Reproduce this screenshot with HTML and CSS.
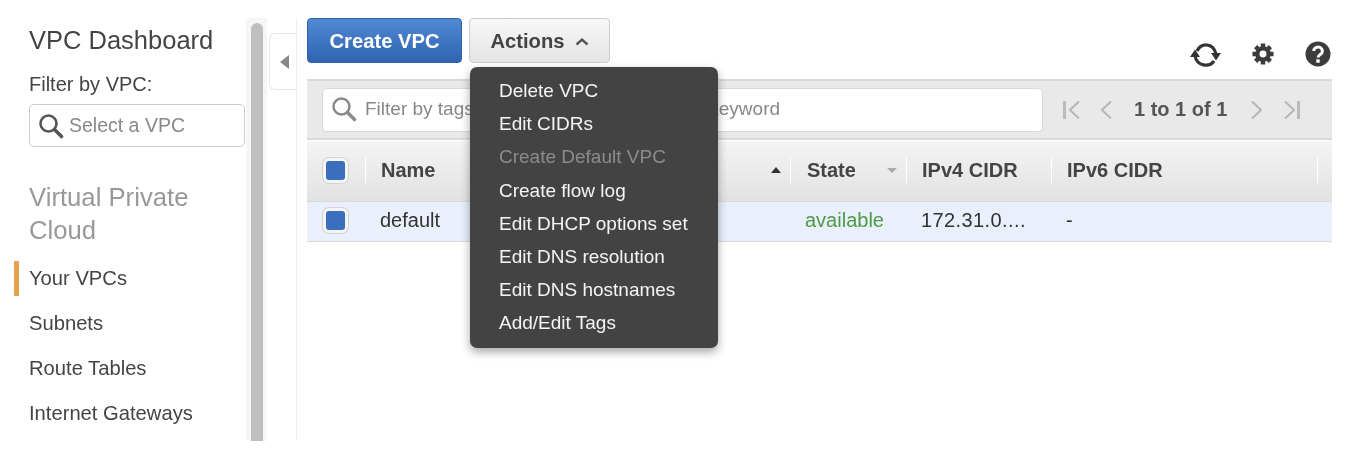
FILE: index.html
```html
<!DOCTYPE html>
<html lang="en">
<head>
    <meta charset="UTF-8">
    <meta name="viewport" content="width=device-width, initial-scale=1.0">
    <title>VPC Dashboard</title>
    <link rel="stylesheet" href="styles.css">
</head>
<body>
    <div class="page">
        <aside class="sidebar">
            <h2 class="side-title">VPC Dashboard</h2>
            <label class="side-label">Filter by VPC:</label>
            <div class="vpc-select">
                <svg class="search-icon" viewBox="0 0 26 26" width="26" height="26"><circle cx="10.5" cy="10.5" r="8" fill="none" stroke="#555" stroke-width="2.6"/><path d="M16.5 16.5l7 7" stroke="#555" stroke-width="3.6" stroke-linecap="round"/></svg>
                <span>Select a VPC</span>
            </div>
            <h3 class="side-section">Virtual Private Cloud</h3>
            <nav class="side-nav">
                <a class="nav-item active">Your VPCs</a>
                <a class="nav-item">Subnets</a>
                <a class="nav-item">Route Tables</a>
                <a class="nav-item">Internet Gateways</a>
            </nav>
        </aside>

        <div class="scroll-gutter"><div class="scroll-thumb"></div></div>

        <div class="collapse-col">
            <div class="collapse-tab"><span class="arrow-left"></span></div>
        </div>

        <main class="main">
            <div class="toolbar">
                <button class="btn btn-primary">Create VPC</button>
                <div class="actions-wrap">
                    <button class="btn btn-default">Actions
                        <svg viewBox="0 0 14 9" width="14" height="9"><path d="M1.5 7.5L7 2.5l5.5 5" fill="none" stroke="#555" stroke-width="2.4"/></svg>
                    </button>
                    <ul class="menu">
                        <li>Delete VPC</li>
                        <li>Edit CIDRs</li>
                        <li class="disabled">Create Default VPC</li>
                        <li>Create flow log</li>
                        <li>Edit DHCP options set</li>
                        <li>Edit DNS resolution</li>
                        <li>Edit DNS hostnames</li>
                        <li>Add/Edit Tags</li>
                    </ul>
                </div>
                <div class="tool-icons">
                    <svg class="refresh-icon" viewBox="4 8 31 26" width="31" height="26"><path d="M11 16C15 8 27 7 30 19" fill="none" stroke="#333" stroke-width="3.200"/><path d="M9 21C11 31 23 33 28 26" fill="none" stroke="#333" stroke-width="3.200"/><path d="M4 22h10L9 14.500z" fill="#333"/><path d="M25 18h10L30 25.500z" fill="#333"/></svg>
                    <svg viewBox="0 0 24 24" width="22" height="22"><circle cx="12" cy="12" r="8.500" fill="#3c3c3c"/><path d="M12 .5v23M.5 12h23M3.900 3.900l16.200 16.200M20.100 3.900L3.900 20.100" stroke="#3c3c3c" stroke-width="4.800"/><circle cx="12" cy="12" r="3.800" fill="#fff"/></svg>
                    <svg viewBox="0 0 26 26" width="26" height="26"><circle cx="13" cy="13" r="12.500" fill="#3c3c3c"/><path d="M8.800 10a4.300 4 0 1 1 6.500 3.400c-1.500 1-2.300 1.500-2.300 3.100" fill="none" stroke="#fff" stroke-width="3"/><rect x="11.300" y="18.300" width="3.400" height="3.400" fill="#fff"/></svg>
                </div>
            </div>

            <div class="filter-bar">
                <div class="filter-input">
                    <svg class="search-icon" viewBox="0 0 26 26" width="26" height="26"><circle cx="10.500" cy="10.500" r="8" fill="none" stroke="#888" stroke-width="2.400"/><path d="M16.500 16.500l7 7" stroke="#888" stroke-width="3.400" stroke-linecap="round"/></svg>
                    <span>Filter by tags and attributes or search by keyword</span>
                </div>
                <div class="pager">
                    <svg viewBox="0 0 17 18" width="17" height="18"><path d="M1.500 0v18" stroke="#bbb" stroke-width="3"/><path d="M16 .5L7 9l9 8.500" fill="none" stroke="#b5b5b5" stroke-width="2"/></svg>
                    <svg class="pager-prev" viewBox="0 0 12 18" width="12" height="18"><path d="M11 .5L2 9l9 8.500" fill="none" stroke="#b5b5b5" stroke-width="2"/></svg>
                    <span class="pager-text">1 to 1 of 1</span>
                    <svg class="pager-next" viewBox="0 0 12 18" width="12" height="18"><path d="M1 .5L10 9l-9 8.500" fill="none" stroke="#b5b5b5" stroke-width="2"/></svg>
                    <svg viewBox="0 0 16 18" width="16" height="18"><path d="M14.500 0v18" stroke="#bbb" stroke-width="3"/><path d="M1 .5L10 9l-9 8.500" fill="none" stroke="#b5b5b5" stroke-width="2"/></svg>
                </div>
            </div>

            <div class="table-head table-grid">
                <div class="cell cell-check"><span class="check"></span></div>
                <div class="cell head-cell name-head"><span>Name</span><span class="sort-up"></span></div>
                <div class="cell head-cell state-head"><span>State</span><span class="sort-down"></span></div>
                <div class="cell head-cell">IPv4 CIDR</div>
                <div class="cell head-cell">IPv6 CIDR</div>
                <div class="cell"></div>
            </div>
            <div class="table-row table-grid">
                <div class="cell cell-check"><span class="check"></span></div>
                <div class="cell">default</div>
                <div class="cell status">available</div>
                <div class="cell cidr">172.31.0....</div>
                <div class="cell">-</div>
                <div class="cell"></div>
            </div>
        </main>
    </div>
</body>
</html>
```

FILE: styles.css
```css
:root {
    --text-color: #444;
    --muted-color: #999;
    --line-color: #d9d9d9;
    --row-color: #e9f0fb;
    --blue-color: #3b6fbd;
}

* {
    margin: 0;
    padding: 0;
    box-sizing: border-box;
    font-family: "Liberation Sans", Arial, sans-serif;
}

body {
    background-color: white;
    color: var(--text-color);
    overflow: hidden;
}

/* the source picture is a soft, scaled up capture */
.page {
    display: flex;
    height: 423px;
    margin-top: 18px;
    width: 1332px;
    filter: blur(0.6px);
}

/* sidebar */
.sidebar {
    width: 246px;
    flex: none;
    padding-left: 29px;
    overflow: hidden;
}

.side-title {
    font-size: 25.500px;
    font-weight: normal;
    line-height: 30px;
    margin-top: 7px;
}

.side-label {
    display: block;
    font-size: 20px;
    line-height: 24px;
    margin-top: 17px;
}

.vpc-select {
    display: flex;
    align-items: center;
    gap: 5px;
    width: 216px;
    height: 43px;
    margin-top: 8px;
    padding-left: 8px;
    border: 1px solid #ccc;
    border-radius: 5px;
    font-size: 19.500px;
    color: #888;
}

.side-section {
    font-size: 25.700px;
    font-weight: normal;
    line-height: 33px;
    color: var(--muted-color);
    margin-top: 34px;
    width: 190px;
}

.side-nav {
    margin-top: 14px;
}

.nav-item {
    display: block;
    height: 35px;
    line-height: 35px;
    font-size: 20.200px;
    margin-bottom: 10px;
}

.nav-item.active {
    margin-left: -15px;
    padding-left: 10px;
    border-left: 5px solid #e8a24f;
}

/* scrollbar */
.scroll-gutter {
    width: 21px;
    flex: none;
    padding: 5px 4px 0 5px;
    background-color: #f6f6f6;
}

.scroll-thumb {
    height: 100%;
    background-color: #bfbfbf;
    border-radius: 6px 6px 0 0;
}

/* collapse tab */
.collapse-col {
    width: 30px;
    flex: none;
    padding: 15px 0 0 2px;
    border-right: 1px solid #eee;
}

.collapse-tab {
    display: flex;
    align-items: center;
    height: 57px;
    padding-left: 10px;
    border: 1px solid #e6e6e6;
    border-right: none;
    border-radius: 6px 0 0 6px;
}

.arrow-left {
    border-top: 7px solid transparent;
    border-bottom: 7px solid transparent;
    border-right: 9px solid #888;
}

/* main */
.main {
    flex: 1;
    padding-left: 10px;
    min-width: 0;
}

.toolbar {
    display: flex;
    height: 61px;
    gap: 7px;
}

.btn {
    height: 45px;
    padding-top: 2px;
    font-size: 20.200px;
    font-weight: bold;
    border-radius: 4px;
}

.btn-primary {
    width: 155px;
    color: white;
    background: linear-gradient(#5289d3, #2f64b0);
    border: 1px solid #2f63ad;
}

.btn-default {
    display: flex;
    align-items: center;
    justify-content: center;
    gap: 10px;
    width: 141px;
    color: #444;
    background: linear-gradient(#f8f8f8, #e4e4e4);
    border: 1px solid #ccc;
}

.actions-wrap {
    position: relative;
}

.menu {
    position: absolute;
    left: 1px;
    top: 49px;
    z-index: 5;
    width: 248px;
    height: 281px;
    padding-top: 7px;
    list-style: none;
    background-color: #434343;
    border-radius: 7px;
    box-shadow: 0 4px 10px rgba(0, 0, 0, 0.35);
}

.menu li {
    height: 33.200px;
    line-height: 33.200px;
    padding-left: 29px;
    font-size: 19px;
    color: #f4f4f4;
}

.menu li.disabled {
    color: #8c8c8c;
}

.tool-icons {
    display: flex;
    align-items: center;
    gap: 31px;
    margin-left: auto;
    padding: 11px 1px 0 0;
    height: 61px;
}

.refresh-icon {
    margin-top: 3px;
}

.filter-bar {
    display: flex;
    align-items: center;
    height: 61px;
    padding-left: 15px;
    background-color: #e9e9e9;
    border-top: 2px solid var(--line-color);
    border-bottom: 2px solid var(--line-color);
}

.filter-input {
    display: flex;
    align-items: center;
    gap: 8px;
    width: 721px;
    height: 44px;
    padding: 0 0 2px 8px;
    background-color: white;
    border: 1px solid #d8d8d8;
    border-radius: 5px;
    font-size: 19px;
    color: #888;
}

.pager {
    display: flex;
    align-items: center;
    margin-left: 20px;
    color: #555;
}

.pager-prev {
    margin-left: 20px;
}

.pager-text {
    font-size: 20px;
    font-weight: bold;
    margin: 0 24px 0 22px;
}

.pager-next {
    margin-right: 21px;
}

/* table */
.table-grid {
    display: grid;
    grid-template-columns: 58px 425px 116px 145px 266px 1fr;
    align-items: center;
}

.table-head {
    height: 62px;
    padding-bottom: 2px;
    background: linear-gradient(#f4f4f4, #e2e2e2);
    border-top: 1px solid white;
    border-bottom: 1px solid var(--line-color);
    font-size: 20px;
    font-weight: bold;
}

.table-row {
    height: 40px;
    padding-bottom: 2px;
    background-color: var(--row-color);
    border-bottom: 1px solid var(--line-color);
    font-size: 20px;
    color: #333;
}

.cell {
    padding-left: 15px;
    white-space: nowrap;
}

.cell-check {
    padding-left: 19px;
    height: 28px;
    display: flex;
    align-items: center;
}

.head-cell {
    height: 26px;
    line-height: 26px;
    padding-left: 15px;
    border-left: 1px solid white;
}

.table-head .cell:last-child {
    height: 26px;
    border-left: 1px solid white;
}

.name-head,
.state-head {
    display: flex;
    align-items: center;
    justify-content: space-between;
    padding-right: 9px;
}

.state-head {
    padding-left: 16px;
}

.check {
    display: block;
    width: 19px;
    height: 19px;
    background-color: var(--blue-color);
    border-radius: 3px;
    box-shadow: 0 0 0 3px #f4f4f4, 0 0 0 4px #d4d4d4;
}

.sort-up {
    border-left: 5px solid transparent;
    border-right: 5px solid transparent;
    border-bottom: 6px solid #333;
}

.sort-down {
    border-left: 5px solid transparent;
    border-right: 5px solid transparent;
    border-top: 5px solid #aaa;
}

.status {
    color: #4e9a47;
}

.cidr {
    letter-spacing: 0.4px;
}
```
